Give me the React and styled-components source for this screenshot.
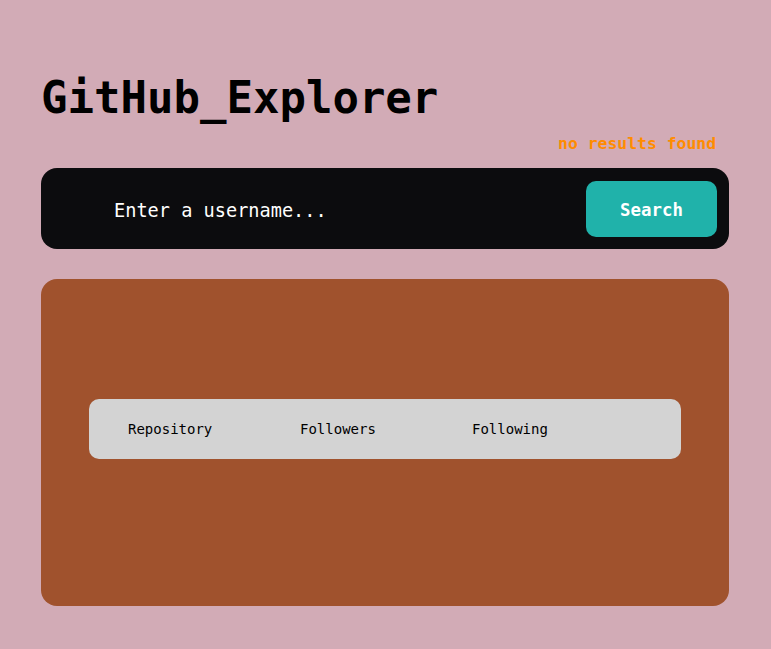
import React, { useState } from 'react'
import styled, { createGlobalStyle } from 'styled-components'

const GlobalStyle = createGlobalStyle`
  body {
    margin: 0;
    background: #d2abb6;
    font-family: "DejaVu Sans Mono", "Liberation Mono", monospace;
  }
`

const Page = styled.div`
  padding: 72px 42px 43px 41px;
`

const Title = styled.h1`
  margin: 0;
  font-size: 44px;
  line-height: 52px;
  font-weight: 700;
  color: #000;
`

const Message = styled.p`
  margin: 10px 13px 14px 0;
  text-align: right;
  font-size: 16.4px;
  line-height: 20px;
  font-weight: 700;
  color: #ff8c00;
`

const SearchBar = styled.form`
  display: flex;
  align-items: center;
  justify-content: space-between;
  height: 81px;
  padding: 1px 12px 0 73px;
  box-sizing: border-box;
  background: #0c0c0e;
  border-radius: 16px;
`

const Input = styled.input`
  flex: 1;
  background: transparent;
  border: none;
  outline: none;
  color: #fff;
  font-family: inherit;
  font-size: 18.6px;
  padding: 2px 0 0;
  &::placeholder {
    color: #fff;
    opacity: 1;
  }
`

const Button = styled.button`
  width: 131px;
  height: 56px;
  border: none;
  border-radius: 10px;
  background: #20b2aa;
  color: #fff;
  font-family: inherit;
  font-weight: 700;
  font-size: 17.4px;
  padding: 2px 0 0;
  cursor: pointer;
`

const Card = styled.section`
  margin-top: 30px;
  padding: 120px 48px 147px;
  background: #a0522d;
  border-radius: 16px;
`

const Stats = styled.ul`
  display: grid;
  grid-template-columns: repeat(3, 172px);
  align-items: center;
  height: 60px;
  margin: 0;
  padding: 0 0 0 39px;
  list-style: none;
  background: #d3d3d3;
  border-radius: 10px;
`

const Stat = styled.li`
  font-size: 14px;
  color: #000;
`

const App = () => {
  const [name, setName] = useState('')

  return (
    <>
      <GlobalStyle />
      <Page>
        <Title>GitHub_Explorer</Title>
        <Message>no results found</Message>
        <SearchBar onSubmit={e => e.preventDefault()}>
          <Input
            value={name}
            onChange={e => setName(e.target.value)}
            placeholder="Enter a username..."
          />
          <Button type="submit">Search</Button>
        </SearchBar>
        <Card>
          <Stats>
            <Stat>Repository</Stat>
            <Stat>Followers</Stat>
            <Stat>Following</Stat>
          </Stats>
        </Card>
      </Page>
    </>
  )
}

export default App
